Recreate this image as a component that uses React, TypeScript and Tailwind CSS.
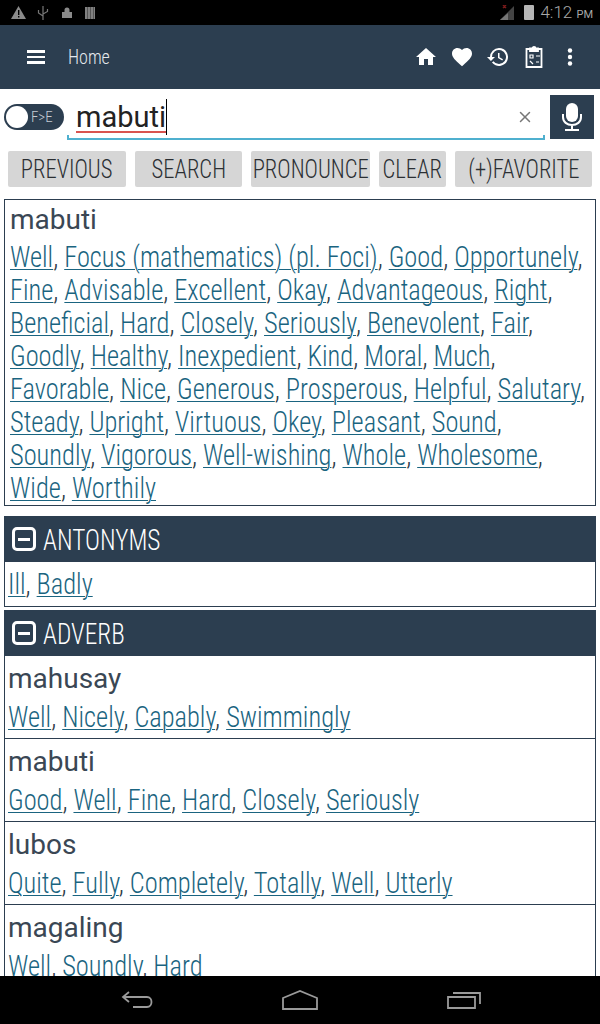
import React from 'react';
import { X } from 'lucide-react';

const navy = 'bg-[#2c3e50]';

const mainWords = [
  'Well', 'Focus (mathematics) (pl. Foci)', 'Good', 'Opportunely', 'Fine', 'Advisable', 'Excellent', 'Okay',
  'Advantageous', 'Right', 'Beneficial', 'Hard', 'Closely', 'Seriously', 'Benevolent', 'Fair', 'Goodly', 'Healthy',
  'Inexpedient', 'Kind', 'Moral', 'Much', 'Favorable', 'Nice', 'Generous', 'Prosperous', 'Helpful', 'Salutary',
  'Steady', 'Upright', 'Virtuous', 'Okey', 'Pleasant', 'Sound', 'Soundly', 'Vigorous', 'Well-wishing', 'Whole',
  'Wholesome', 'Wide', 'Worthily',
];

const adverbs = [
  { word: 'mahusay', links: ['Well', 'Nicely', 'Capably', 'Swimmingly'] },
  { word: 'mabuti', links: ['Good', 'Well', 'Fine', 'Hard', 'Closely', 'Seriously'] },
  { word: 'lubos', links: ['Quite', 'Fully', 'Completely', 'Totally', 'Well', 'Utterly'] },
  { word: 'magaling', links: ['Well', 'Soundly', 'Hard'] },
];

// the app's font is narrower than Roboto Condensed, so the text is squeezed a bit more
const LinkList = ({ items }: { items: string[] }) => (
  <p className="w-[637px] origin-left scale-x-[0.91] text-[29px] leading-[33px] text-[#2e3b47] font-light [font-stretch:75%]">
    {items.map((w, i) => (
      <React.Fragment key={w + i}>
        <a className="text-[#1a6480] underline underline-offset-2 decoration-1">{w}</a>
        {i < items.length - 1 ? ', ' : ''}
      </React.Fragment>
    ))}
  </p>
);

const SectionHead = ({ title }: { title: string }) => (
  <div className={`${navy} h-[46px] flex items-center pl-2 gap-[7px] text-white`}>
    <div className="w-6 h-6 border-[3px] border-white rounded-[5px] flex items-center justify-center">
      <div className="w-3 h-[3px] bg-white" />
    </div>
    <span className="origin-left scale-x-[0.873] text-[29px] font-light [font-stretch:75%] mt-[3px]">{title}</span>
  </div>
);

const buttons = [
  { label: 'PREVIOUS', w: 'w-[118px]' },
  { label: 'SEARCH', w: 'w-[107px]' },
  { label: 'PRONOUNCE', w: 'w-[119px]' },
  { label: 'CLEAR', w: 'w-[67px]' },
  { label: '(+)FAVORITE', w: 'w-[137px]' },
];

export default function App() {
  return (
    <div className="w-[600px] h-[1024px] flex flex-col bg-white overflow-hidden font-[Roboto,sans-serif]">
      {/* status bar */}
      <div className="h-[25px] bg-black flex items-center pl-[11px] pr-[7px] text-[#8a8a8a]">
        <svg width="15" height="13" viewBox="0 0 15 13"><path d="M7.5 0L15 13H0z" fill="#8a8a8a" /><path d="M7 4h1.4v5H7zM7 10h1.4v1.5H7z" fill="#000" /></svg>
        <svg width="12" height="16" viewBox="0 0 12 16" fill="none" stroke="#777" strokeWidth="1.2" className="ml-[11px]">
          <path d="M6 1v14M1.5 5v3l4.500 3M10.500 4v2.500L6 9" />
        </svg>
        <svg width="10" height="11" viewBox="0 0 10 11" className="ml-[13px]"><path d="M2.500 5V3a2.500 2.500 0 015 0v2H10v6H0V5z" fill="#8a8a8a" /></svg>
        <div className="w-[10px] h-[12px] ml-[13px] bg-[repeating-linear-gradient(90deg,#808080_0,#808080_2px,#555_2px,#555_3px)]" />
        <div className="ml-auto flex items-center">
          <svg width="16" height="16" viewBox="0 0 16 16">
            <path d="M15 1v14H1z" fill="#444" />
            <path d="M9 8v7H1z" fill="#777" />
            <path d="M4 0l3 3M7 0L4 3" stroke="#7a1a1a" strokeWidth="1.5" />
          </svg>
          <div className="w-[10px] h-[15px] ml-[9px] bg-[#b5b5b5] rounded-[1px]" />
          <span className="ml-[6px] text-[17px] text-[#a8a8a8] leading-none font-light">
            4:12 <span className="text-[11px] font-normal">PM</span>
          </span>
        </div>
      </div>

      {/* app bar */}
      <div className={`${navy} h-[64px] flex items-center text-white`}>
        <div className="ml-[27px] w-[18px] flex flex-col gap-[3px]">
          <div className="h-[2.5px] bg-white" />
          <div className="h-[2.5px] bg-white" />
          <div className="h-[2.5px] bg-white" />
        </div>
        <span className="ml-[23px] origin-left scale-x-[0.857] text-[21px] font-light text-[#e4e8ec] [font-stretch:75%] mt-[1px]">Home</span>
        <div className="ml-auto flex items-center pr-3">
          <div className="w-9 flex justify-center">
            <svg width="24" height="24" viewBox="0 0 24 24" fill="white"><path d="M10 20v-6h4v6h5v-8h3L12 3 2 12h3v8z" /></svg>
          </div>
          <div className="w-9 flex justify-center">
            <svg width="24" height="24" viewBox="0 0 24 24" fill="white"><path d="M12 21.350l-1.450-1.320C5.400 15.360 2 12.280 2 8.500 2 5.420 4.420 3 7.500 3c1.740 0 3.410.81 4.500 2.090C13.090 3.810 14.760 3 16.500 3 19.580 3 22 5.420 22 8.500c0 3.780-3.400 6.860-8.550 11.540z" /></svg>
          </div>
          <div className="w-9 flex justify-center">
            <svg width="24" height="24" viewBox="0 0 24 24" fill="white"><path d="M13 3a9 9 0 00-9 9H1l3.890 3.890.07.140L9 12H6a7 7 0 111.390 4.190l-1.420 1.420A9 9 0 1013 3zm-1 5v5l4.280 2.540.72-1.210-3.500-2.080V8z" /></svg>
          </div>
          <div className="w-9 flex justify-center">
            <svg width="20" height="24" viewBox="0 0 20 24" fill="none" stroke="white" strokeWidth="1.800">
              <path d="M6 4H2.500v18h15V4H14" />
              <path d="M6 6h8V3.500h-2.500a1.500 1.500 0 00-3 0H6z" fill="white" />
              <path d="M6 10h3v3H6zM12 11h4M6 16l3 3M12 17h3" strokeWidth="1.200" />
            </svg>
          </div>
          <div className="w-9 flex justify-center">
            <svg width="24" height="24" viewBox="0 0 24 24" fill="white"><circle cx="12" cy="5.500" r="2.200" /><circle cx="12" cy="12" r="2.200" /><circle cx="12" cy="18.500" r="2.200" /></svg>
          </div>
        </div>
      </div>

      {/* search row */}
      <div className="h-[56px] flex items-start pl-1 pr-[6px] pt-[6px]">
        <div className={`${navy} mt-[9px] w-[60px] h-[26px] rounded-full flex items-center pl-[2px] gap-[3px]`}>
          <div className="w-[22px] h-[22px] rounded-full bg-white" />
          <span className="text-[#c5ccd3] text-[15px] font-light [font-stretch:75%]">F&gt;E</span>
        </div>
        <div className="relative ml-[3px] flex-1 h-[45px] border-b-[2px] border-[#4fb0cf] flex items-center pl-[9px] pr-[11px]">
          <span className="text-[29px] text-[#222] border-b-[2px] border-[#d9534f] leading-[27px] mt-[3px]">mabuti</span>
          <div className="w-px h-[36px] bg-black" />
          <X size={18} className="ml-auto text-[#777]" />
          <div className="absolute left-0 bottom-0 w-[2px] h-[3px] bg-[#4fb0cf]" />
          <div className="absolute right-0 bottom-0 w-[2px] h-[3px] bg-[#4fb0cf]" />
        </div>
        <div className={`${navy} ml-[5px] w-[44px] h-[44px] flex items-center justify-center`}>
          <svg width="20" height="28" viewBox="0 0 20 28" fill="none" stroke="white" strokeWidth="2">
            <rect x="4" y="0" width="12" height="19" rx="6" fill="white" stroke="none" />
            <path d="M1 11v3c0 5 4 8 9 8s9-3 9-8v-3M10 22v4M3 27h14" />
          </svg>
        </div>
      </div>

      {/* buttons */}
      <div className="flex gap-[9px] pl-2 mt-[6px]">
        {buttons.map(b => (
          <div key={b.label} className={`${b.w} h-[36px] bg-[#d6d6d6] rounded-[2px] flex items-center justify-center text-[#2b2f33]`}>
            <span className="scale-x-[0.87] text-[26px] font-light [font-stretch:75%] whitespace-nowrap">{b.label}</span>
          </div>
        ))}
      </div>

      {/* results */}
      <div className="mt-3 mx-1 flex-1 overflow-hidden flex flex-col">
        <div className="border border-[#2c3e50] px-[5px] h-[307px]">
          <div className="text-[28px] leading-[37px] text-[#3a4754] mt-[1px] mb-[3px]">mabuti</div>
          <LinkList items={mainWords} />
        </div>
        <div className="mt-[10px]">
          <SectionHead title="ANTONYMS" />
          <div className="border border-t-0 border-[#2c3e50] px-[3px] h-[45px] flex items-center">
            <LinkList items={['Ill', 'Badly']} />
          </div>
        </div>
        <div className="mt-[3px] flex-1 flex flex-col">
          <SectionHead title="ADVERB" />
          <div className="border-x border-[#2c3e50] flex-1 overflow-hidden">
            {adverbs.map(a => (
              <div key={a.word} className="border-b border-[#2c3e50] px-[3px] pt-[1px] h-[83px]">
                <div className="text-[28px] leading-[44px] text-[#3a4754]">{a.word}</div>
                <LinkList items={a.links} />
              </div>
            ))}
          </div>
        </div>
      </div>

      {/* nav bar */}
      <div className="h-[48px] bg-black flex items-center pl-[121px] text-[#9a9a9a]">
        <svg width="34" height="20" viewBox="0 0 34 20" fill="none" stroke="currentColor" strokeWidth="1.800">
          <path d="M8 2L2 7l6 5M2 7h24c6 0 6 10 0 10H12" />
        </svg>
        <svg width="36" height="20" viewBox="0 0 36 20" fill="none" stroke="currentColor" strokeWidth="1.800" className="ml-[127px]">
          <path d="M1 8L18 1l17 7v11H1z" />
        </svg>
        <svg width="34" height="20" viewBox="0 0 34 20" fill="none" stroke="currentColor" strokeWidth="1.800" className="ml-[129px]">
          <path d="M1 7h27v11H1zM6 3h27v11" />
        </svg>
      </div>
    </div>
  );
}
